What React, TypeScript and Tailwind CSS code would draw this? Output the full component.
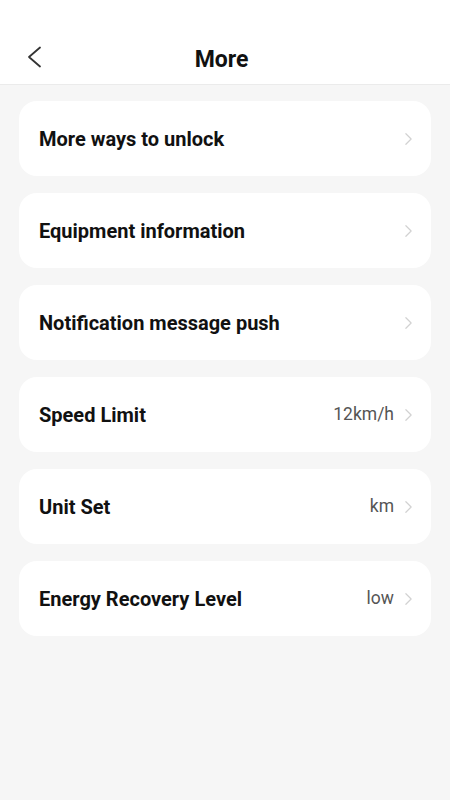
const rows: { label: string; value?: string }[] = [
  { label: "More ways to unlock" },
  { label: "Equipment information" },
  { label: "Notification message push" },
  { label: "Speed Limit", value: "12km/h" },
  { label: "Unit Set", value: "km" },
  { label: "Energy Recovery Level", value: "low" },
];

const Chevron = ({ className }: { className?: string }) => (
  <svg viewBox="0 0 10 16" className={className} fill="none" stroke="currentColor" strokeWidth={1.4} strokeLinecap="round" strokeLinejoin="round">
    <path d="M2 2l6 6-6 6" />
  </svg>
);

export default function App() {
  return (
    <div className="min-h-[800px] bg-[#f6f6f6] font-['Roboto',sans-serif]">
      <header className="relative flex h-[85px] items-end justify-center border-b border-[#ebebeb] bg-white pb-[4px] pr-[7px]">
        <button type="button" className="absolute left-[27px] top-[46px] text-[#333]">
          <svg viewBox="0 0 15 22" className="h-[22px] w-[15px]" fill="none" stroke="currentColor" strokeWidth={1.8} strokeLinecap="round" strokeLinejoin="round">
            <path d="M13 1.5L2 11l11 9.5" />
          </svg>
        </button>
        <h1 className="text-[23px] font-bold leading-[40px] text-[#111]">More</h1>
      </header>

      <main className="flex flex-col gap-[17px] px-[19px] pt-[16px]">
        {rows.map((row) => (
          <div
            key={row.label}
            className="flex h-[75px] items-center rounded-[18px] bg-white pl-[20px] pr-[18px]"
          >
            <span className="flex-1 text-[20px] font-bold text-[#111]">{row.label}</span>
            {row.value && <span className="mr-[10px] text-[17.5px] text-[#555]">{row.value}</span>}
            <Chevron className="h-[14px] w-[9px] text-[#d2d2d2]" />
          </div>
        ))}
      </main>
    </div>
  );
}
